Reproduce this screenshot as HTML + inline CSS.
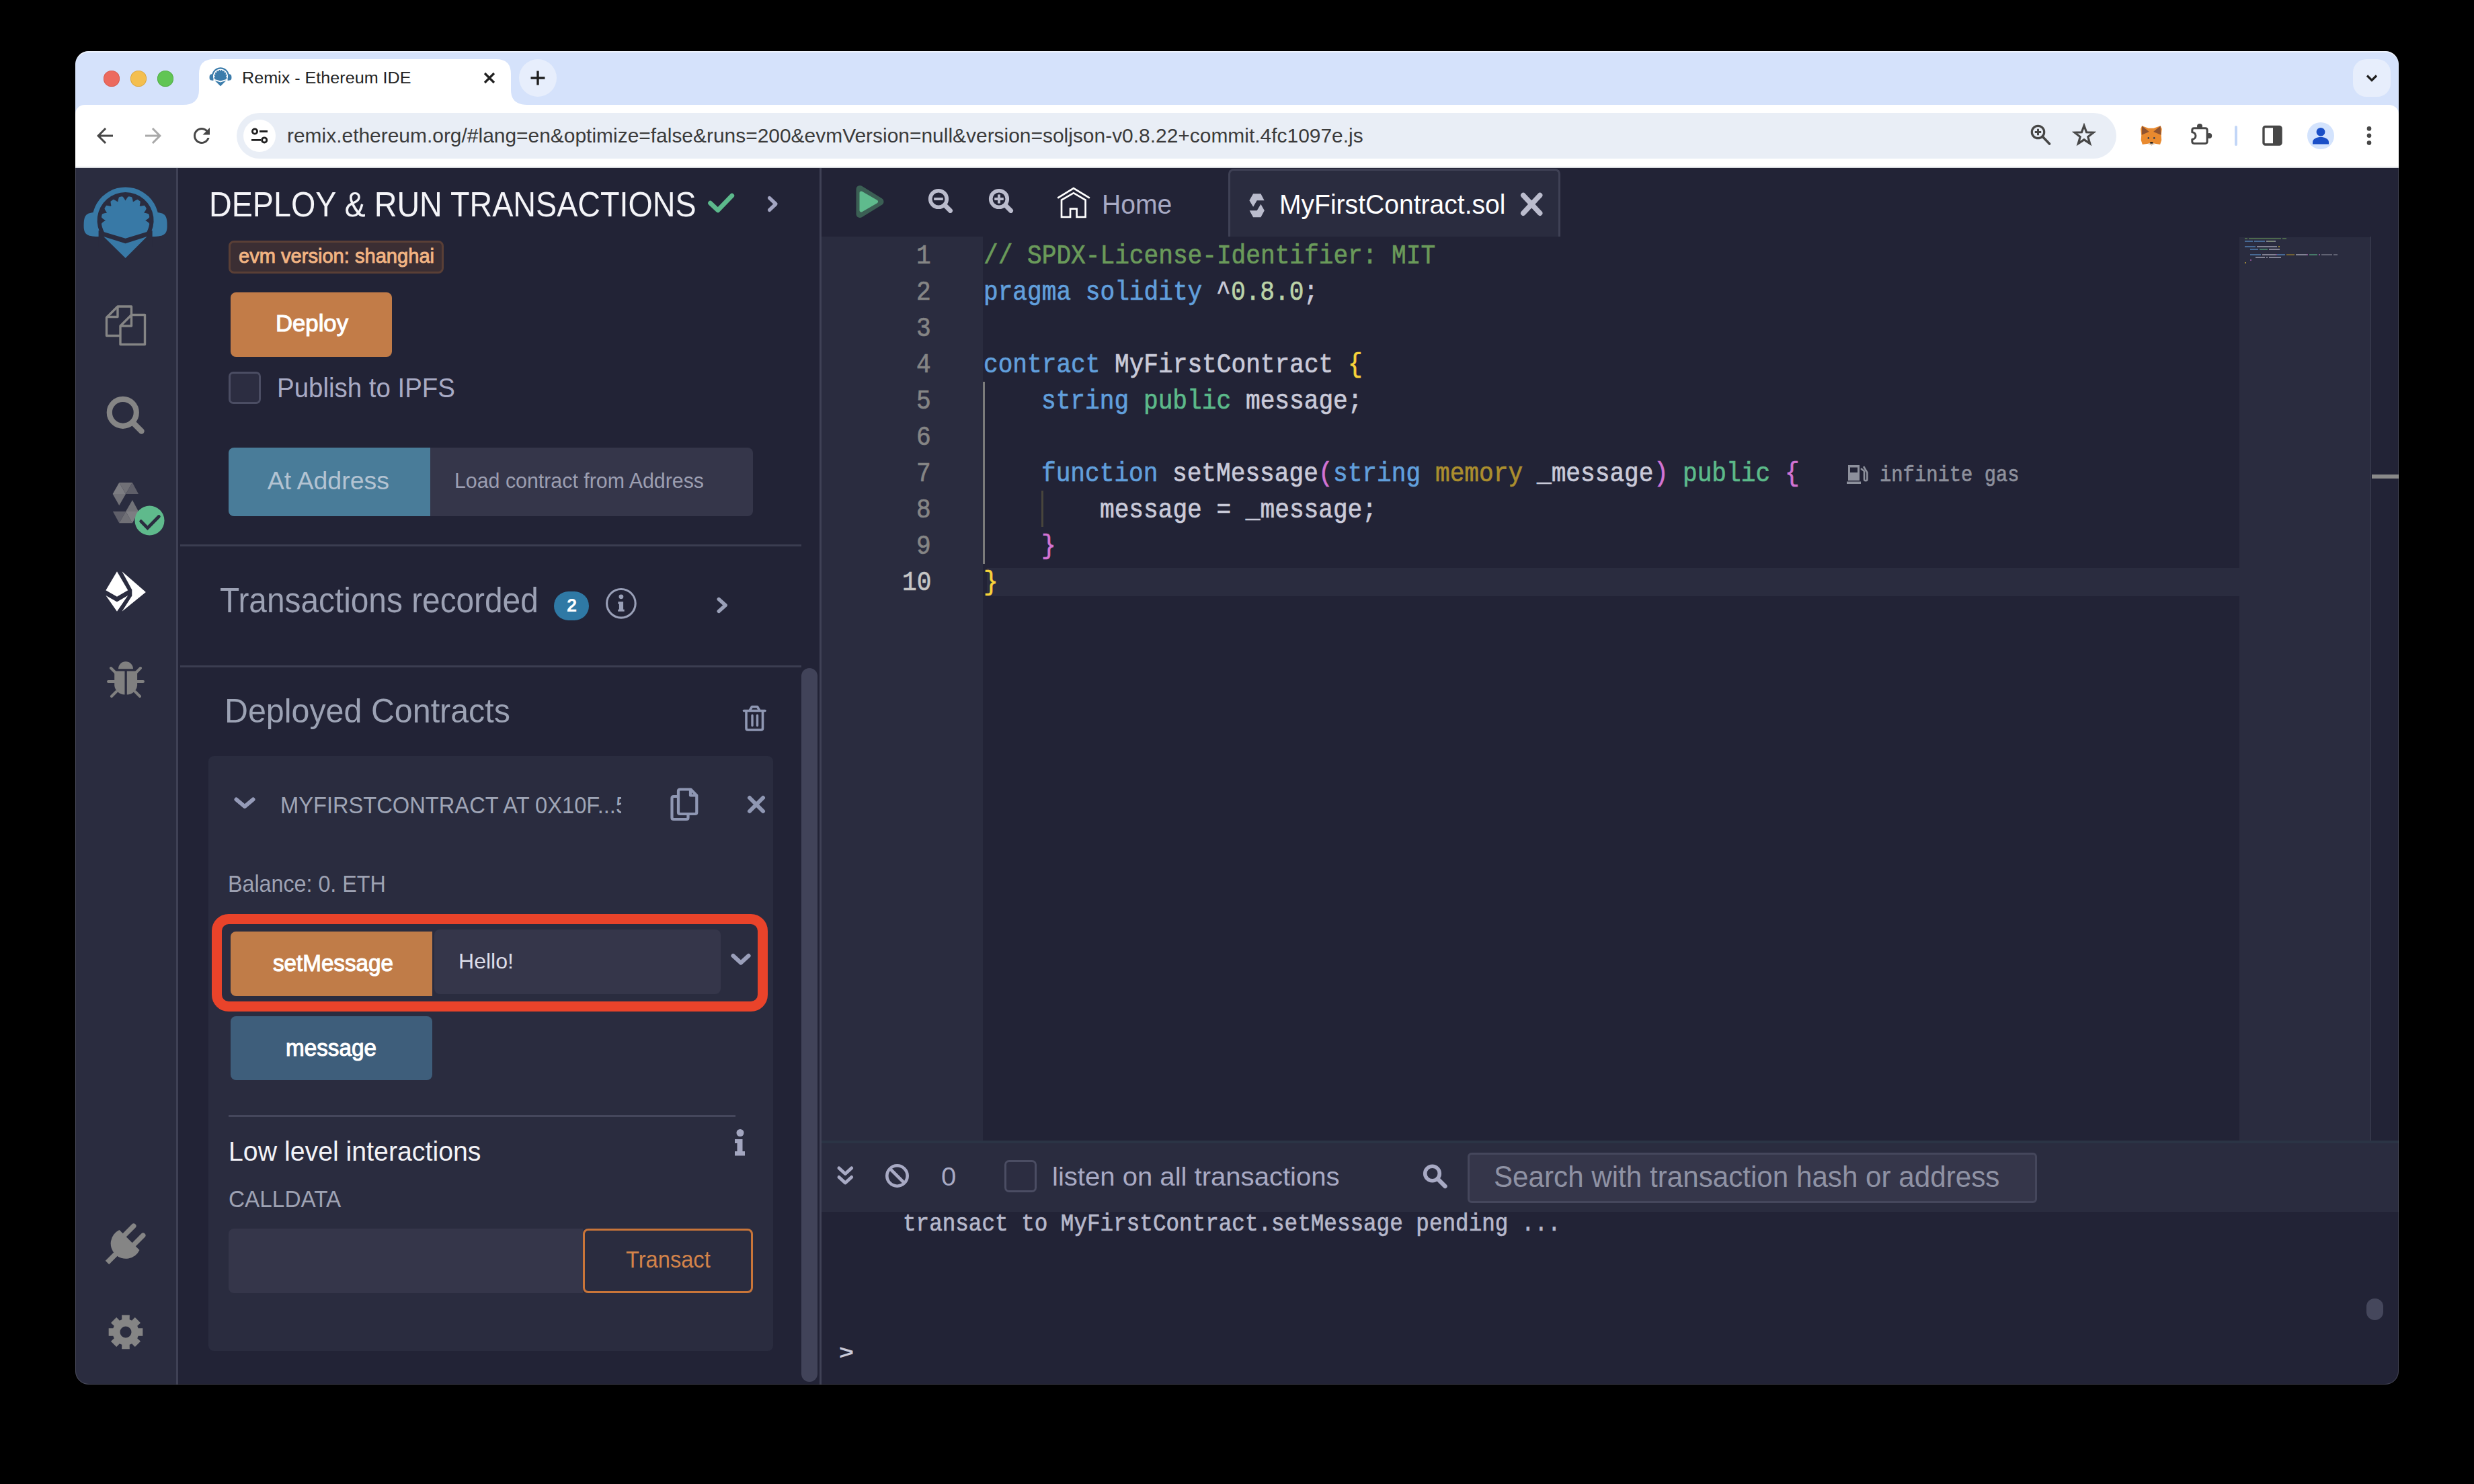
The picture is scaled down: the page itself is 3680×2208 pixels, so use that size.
<!DOCTYPE html><html><head><meta charset="utf-8"><style>
html,body{margin:0;padding:0;background:#000;width:3680px;height:2208px;overflow:hidden}
#r{position:absolute;left:0;top:0;width:3680px;height:2208px;overflow:hidden}
#r>*{position:absolute}
#r>span{white-space:pre}
</style></head><body><div id="r">
<div style="left:112px;top:76px;width:3456px;height:100px;background:#d5e2fb;"></div>
<svg style="left:260px;top:76px;" width="540" height="80" viewBox="0 0 540 80"><path d="M12,80 Q36,80 36,58 L36,34 Q36,12 58,12 L478,12 Q500,12 500,34 L500,58 Q500,80 524,80 Z" fill="#fff"/></svg>
<svg style="left:296px;top:83px;" width="64" height="64" viewBox="0 0 64 64"><g transform="translate(32,30.5) scale(0.265)"><path d="M-43.6,23.4 A49.5,49.5 0 1 1 43.6,23.4 Z" fill="#3b7cab"/><path d="M-44,-12 C-60,-12 -62,-6 -62,8 C-62,22 -56,24 -38,24 L-40,-12 Z" fill="#3b7cab"/><path d="M44,-12 C60,-12 62,-6 62,8 C62,22 56,24 38,24 L40,-12 Z" fill="#3b7cab"/><path d="M-34.9,23.4 A42,42 0 1 1 34.9,23.4 Z" fill="#ffffff"/><polygon points="29.50,0.00 31.34,1.09 33.13,2.32 34.88,3.67 35.65,5.01 35.45,6.25 35.21,7.48 34.93,8.71 34.61,9.92 34.24,11.12 33.83,12.31 33.38,13.49 32.89,14.64 32.36,15.78 31.79,16.90 31.18,18.00 30.53,19.08 29.85,20.13 29.12,21.16 28.37,22.16 27.58,23.14 26.75,24.09 25.90,25.01 25.01,25.90 24.09,26.75 23.14,27.58 22.16,28.37 21.16,29.12 20.13,29.85 19.08,30.53 18.00,31.18 16.90,31.79 15.78,32.36 14.64,32.89 13.49,33.38 12.31,33.83 11.12,34.24 9.92,34.61 8.71,34.93 7.48,35.21 6.25,35.45 5.01,35.65 3.76,35.80 2.51,35.91 1.26,35.98 0.00,36.00 -1.26,35.98 -2.51,35.91 -3.76,35.80 -5.01,35.65 -6.25,35.45 -7.48,35.21 -8.71,34.93 -9.92,34.61 -11.12,34.24 -12.31,33.83 -13.49,33.38 -14.64,32.89 -15.78,32.36 -16.90,31.79 -18.00,31.18 -19.08,30.53 -20.13,29.85 -21.16,29.12 -22.16,28.37 -23.14,27.58 -24.09,26.75 -25.01,25.90 -25.90,25.01 -26.75,24.09 -27.58,23.14 -28.37,22.16 -29.12,21.16 -29.85,20.13 -30.53,19.08 -31.18,18.00 -31.79,16.90 -32.36,15.78 -32.89,14.64 -33.38,13.49 -33.83,12.31 -34.24,11.12 -34.61,9.92 -34.93,8.71 -35.21,7.48 -35.45,6.25 -35.65,5.01 -34.88,3.67 -33.13,2.32 -31.34,1.09 -29.50,0.00 -31.34,-1.09 -33.13,-2.32 -34.88,-3.67 -35.65,-5.01 -35.45,-6.25 -35.21,-7.48 -34.93,-8.71 -34.16,-9.79 -32.03,-10.41 -29.90,-10.88 -27.78,-11.22 -28.22,-12.57 -29.44,-14.36 -30.56,-16.25 -31.18,-18.00 -30.53,-19.08 -29.85,-20.13 -29.12,-21.16 -28.37,-22.16 -26.15,-21.95 -23.99,-21.60 -21.89,-21.14 -21.14,-21.89 -21.60,-23.99 -21.95,-26.15 -22.16,-28.37 -21.16,-29.12 -20.13,-29.85 -19.08,-30.53 -18.00,-31.18 -16.25,-30.56 -14.36,-29.44 -12.57,-28.22 -11.22,-27.78 -10.88,-29.90 -10.41,-32.03 -9.79,-34.16 -8.71,-34.93 -7.48,-35.21 -6.25,-35.45 -5.01,-35.65 -3.67,-34.88 -2.32,-33.13 -1.09,-31.34 -0.00,-29.50 1.09,-31.34 2.32,-33.13 3.67,-34.88 5.01,-35.65 6.25,-35.45 7.48,-35.21 8.71,-34.93 9.79,-34.16 10.41,-32.03 10.88,-29.90 11.22,-27.78 12.57,-28.22 14.36,-29.44 16.25,-30.56 18.00,-31.18 19.08,-30.53 20.13,-29.85 21.16,-29.12 22.16,-28.37 21.95,-26.15 21.60,-23.99 21.14,-21.89 21.89,-21.14 23.99,-21.60 26.15,-21.95 28.37,-22.16 29.12,-21.16 29.85,-20.13 30.53,-19.08 31.18,-18.00 30.56,-16.25 29.44,-14.36 28.22,-12.57 27.78,-11.22 29.90,-10.88 32.03,-10.41 34.16,-9.79 34.93,-8.71 35.21,-7.48 35.45,-6.25 35.65,-5.01 34.88,-3.67 33.13,-2.32 31.34,-1.09" fill="#3b7cab"/><polygon points="-40,15 -32.5,17.1 0,26.8 32,17.1 40,15 40,40 -40,40" fill="#ffffff"/><polygon points="-32.5,24 0,34.3 32,24 0,56" fill="#3b7cab"/></g></svg>
<span style="left:359.96px;top:104.00px;font:400 24.7px/24.7px &quot;Liberation Sans&quot;, sans-serif;color:#1f1f1f;transform:scaleX(1.0185);transform-origin:0 0;">Remix - Ethereum IDE</span>
<svg style="left:712px;top:100px;" width="32" height="32" viewBox="0 0 32 32"><path d="M9,9 L23,23 M23,9 L9,23" stroke="#1f1f1f" stroke-width="3.2" stroke-linecap="butt"/></svg>
<div style="left:772px;top:88px;width:56px;height:56px;background:#e7eefc;border-radius:28px"></div>
<svg style="left:784px;top:100px;" width="32" height="32" viewBox="0 0 32 32"><path d="M16,5.5 V26.5 M5.5,16 H26.5" stroke="#1f1f1f" stroke-width="3.4"/></svg>
<div style="left:3500px;top:88px;width:56px;height:56px;background:#e7eefc;border-radius:20px"></div>
<svg style="left:3512px;top:100px;" width="32" height="32" viewBox="0 0 32 32"><path d="M9,12.5 L16,19.5 L23,12.5" fill="none" stroke="#1f1f1f" stroke-width="3.2"/></svg>
<div style="left:112px;top:156px;width:3456px;height:93px;background:#fff;border-radius:14px 14px 0 0"></div>
<div style="left:112px;top:248px;width:3456px;height:2px;background:#dadce0;"></div>
<svg style="left:138px;top:184px;" width="36" height="36" viewBox="0 0 36 36"><path transform="scale(1.5)" d="M20 11H7.83l5.59-5.59L12 4l-8 8 8 8 1.41-1.41L7.83 13H20v-2z" fill="#474747"/></svg>
<svg style="left:209.5px;top:184px;" width="36" height="36" viewBox="0 0 36 36"><path transform="translate(36,0) scale(-1.5,1.5)" d="M20 11H7.83l5.59-5.59L12 4l-8 8 8 8 1.41-1.41L7.83 13H20v-2z" fill="#a9a9a9"/></svg>
<svg style="left:282px;top:184px;" width="36" height="36" viewBox="0 0 36 36"><path transform="scale(1.5)" d="M17.65 6.35C16.2 4.9 14.21 4 12 4c-4.42 0-7.99 3.58-7.99 8s3.57 8 7.99 8c3.73 0 6.84-2.55 7.73-6h-2.08c-.82 2.33-3.04 4-5.65 4-3.31 0-6-2.69-6-6s2.69-6 6-6c1.66 0 3.14.69 4.22 1.78L13 11h7V4l-2.35 2.35z" fill="#474747"/></svg>
<div style="left:352px;top:168px;width:2796px;height:68px;background:#e9eef6;border-radius:34px"></div>
<div style="left:362px;top:178px;width:48px;height:48px;background:#fff;border-radius:24px"></div>
<svg style="left:362px;top:178px;" width="48" height="48" viewBox="0 0 48 48"><circle cx="17" cy="17.5" r="3.6" fill="none" stroke="#1f1f1f" stroke-width="2.8"/><path d="M24,17.5 H36 M12,30.4 H26" stroke="#1f1f1f" stroke-width="2.8"/><circle cx="31.2" cy="30.4" r="3.6" fill="none" stroke="#1f1f1f" stroke-width="2.8"/></svg>
<span style="left:426.89px;top:186.90px;font:400 29.5px/29.5px &quot;Liberation Sans&quot;, sans-serif;color:#3b3b3b;transform:scaleX(1.0147);transform-origin:0 0;">remix.ethereum.org/#lang=en&amp;optimize=false&amp;runs=200&amp;evmVersion=null&amp;version=soljson-v0.8.22+commit.4fc1097e.js</span>
<svg style="left:3017px;top:183px;" width="36" height="36" viewBox="0 0 36 36"><circle cx="14.5" cy="13.5" r="9.2" fill="none" stroke="#474747" stroke-width="3.2"/><path d="M21,20 L31.5,31" stroke="#474747" stroke-width="3.6" stroke-linecap="round"/><path d="M14.5,8.8 V18.2 M9.8,13.5 H19.2" stroke="#474747" stroke-width="3"/></svg>
<svg style="left:3082px;top:183px;" width="36" height="36" viewBox="0 0 36 36"><path d="M18,4 L21.6,13.8 L32,14.2 L23.8,20.6 L26.6,30.6 L18,24.8 L9.4,30.6 L12.2,20.6 L4,14.2 L14.4,13.8 Z" fill="none" stroke="#474747" stroke-width="3.2" stroke-linejoin="miter"/></svg>
<svg style="left:3180px;top:183px;" width="40" height="37" viewBox="0 0 40 37"><g transform="translate(-3180,-183)"><polygon points="3186,187.3 3195.7,190.8 3203.6,190.8 3213.6,187.3 3215.7,191.8 3214.7,201.3 3215.2,208.6 3213.1,215 3204.2,213.4 3200.5,216.5 3196.8,213.4 3186.8,215 3184.7,208.6 3185.2,201.3 3184.2,191.8" fill="#e98a2f"/><polygon points="3186,187.3 3196.8,196 3185.8,200.7" fill="#8f5330"/><polygon points="3213.6,187.3 3203.1,196 3214.4,200.7" fill="#8f5330"/><polygon points="3194.7,213.9 3200.5,216.5 3205.7,213.9 3200.5,212" fill="#d9c8b8"/><rect x="3198.3" y="211.2" width="4" height="2.4" fill="#161616"/><circle cx="3195.8" cy="205.4" r="1.3" fill="#2c3a55"/><circle cx="3204.3" cy="205.4" r="1.3" fill="#2c3a55"/></g></svg>
<svg style="left:3252px;top:180px;" width="44" height="40" viewBox="0 0 44 40"><g transform="translate(-3252,-180)"><path d="M3260.8,193.5 Q3260.8,190.7 3263.6,190.7 H3280.3 Q3283.1,190.7 3283.1,193.5 V210.6 Q3283.1,213.4 3280.3,213.4 H3263.6 Q3260.8,213.4 3260.8,210.6 V207.2 A5.2,5.2 0 0 0 3260.8,196.8 Z" fill="none" stroke="#474747" stroke-width="3" stroke-linejoin="round"/><circle cx="3272" cy="188" r="4" fill="#474747"/><circle cx="3286.2" cy="202" r="4" fill="#474747"/></g></svg>
<div style="left:3324px;top:187px;width:4px;height:30px;background:#c2d6f7;border-radius:2px"></div>
<svg style="left:3362px;top:184px;" width="36" height="36" viewBox="0 0 36 36"><rect x="5" y="4.5" width="26" height="26.5" rx="2.5" fill="none" stroke="#474747" stroke-width="3.4"/><rect x="19" y="4.5" width="12" height="26.5" fill="#474747"/></svg>
<div style="left:3431.5px;top:181.5px;width:40px;height:40px;background:#d3e3fd;border-radius:20px"></div>
<svg style="left:3431.5px;top:181.5px;" width="40" height="40" viewBox="0 0 40 40"><circle cx="20" cy="14.3" r="6.4" fill="#1a4fc7"/><path d="M8,32.5 V29.5 C8,24.5 14,22 20,22 C26,22 32,24.5 32,29.5 V32.5 Z" fill="#1a4fc7"/></svg>
<svg style="left:3514px;top:183px;" width="20" height="36" viewBox="0 0 20 36"><circle cx="10" cy="8.4" r="3.3" fill="#474747"/><circle cx="10" cy="18.7" r="3.3" fill="#474747"/><circle cx="10" cy="29.6" r="3.3" fill="#474747"/></svg>
<div style="left:154px;top:105px;width:24px;height:24px;background:#ec6a5e;border-radius:12px;box-shadow:inset 0 0 0 0.8px #d3574a"></div>
<div style="left:194px;top:105px;width:24px;height:24px;background:#f4bf4f;border-radius:12px;box-shadow:inset 0 0 0 0.8px #d6a23c"></div>
<div style="left:234px;top:105px;width:24px;height:24px;background:#61c554;border-radius:12px;box-shadow:inset 0 0 0 0.8px #4fa843"></div>
<div style="left:112px;top:250px;width:150px;height:1810px;background:#2a2c3f;"></div>
<div style="left:262px;top:250px;width:3px;height:1810px;background:#3f4155;"></div>
<svg style="left:112px;top:250px;" width="150" height="180" viewBox="0 0 150 180"><g transform="translate(74.6,78) scale(1.0)"><path d="M-43.6,23.4 A49.5,49.5 0 1 1 43.6,23.4 Z" fill="#3879a6"/><path d="M-44,-12 C-60,-12 -62,-6 -62,8 C-62,22 -56,24 -38,24 L-40,-12 Z" fill="#3879a6"/><path d="M44,-12 C60,-12 62,-6 62,8 C62,22 56,24 38,24 L40,-12 Z" fill="#3879a6"/><path d="M-34.9,23.4 A42,42 0 1 1 34.9,23.4 Z" fill="#2a2c3f"/><polygon points="29.50,0.00 31.34,1.09 33.13,2.32 34.88,3.67 35.65,5.01 35.45,6.25 35.21,7.48 34.93,8.71 34.61,9.92 34.24,11.12 33.83,12.31 33.38,13.49 32.89,14.64 32.36,15.78 31.79,16.90 31.18,18.00 30.53,19.08 29.85,20.13 29.12,21.16 28.37,22.16 27.58,23.14 26.75,24.09 25.90,25.01 25.01,25.90 24.09,26.75 23.14,27.58 22.16,28.37 21.16,29.12 20.13,29.85 19.08,30.53 18.00,31.18 16.90,31.79 15.78,32.36 14.64,32.89 13.49,33.38 12.31,33.83 11.12,34.24 9.92,34.61 8.71,34.93 7.48,35.21 6.25,35.45 5.01,35.65 3.76,35.80 2.51,35.91 1.26,35.98 0.00,36.00 -1.26,35.98 -2.51,35.91 -3.76,35.80 -5.01,35.65 -6.25,35.45 -7.48,35.21 -8.71,34.93 -9.92,34.61 -11.12,34.24 -12.31,33.83 -13.49,33.38 -14.64,32.89 -15.78,32.36 -16.90,31.79 -18.00,31.18 -19.08,30.53 -20.13,29.85 -21.16,29.12 -22.16,28.37 -23.14,27.58 -24.09,26.75 -25.01,25.90 -25.90,25.01 -26.75,24.09 -27.58,23.14 -28.37,22.16 -29.12,21.16 -29.85,20.13 -30.53,19.08 -31.18,18.00 -31.79,16.90 -32.36,15.78 -32.89,14.64 -33.38,13.49 -33.83,12.31 -34.24,11.12 -34.61,9.92 -34.93,8.71 -35.21,7.48 -35.45,6.25 -35.65,5.01 -34.88,3.67 -33.13,2.32 -31.34,1.09 -29.50,0.00 -31.34,-1.09 -33.13,-2.32 -34.88,-3.67 -35.65,-5.01 -35.45,-6.25 -35.21,-7.48 -34.93,-8.71 -34.16,-9.79 -32.03,-10.41 -29.90,-10.88 -27.78,-11.22 -28.22,-12.57 -29.44,-14.36 -30.56,-16.25 -31.18,-18.00 -30.53,-19.08 -29.85,-20.13 -29.12,-21.16 -28.37,-22.16 -26.15,-21.95 -23.99,-21.60 -21.89,-21.14 -21.14,-21.89 -21.60,-23.99 -21.95,-26.15 -22.16,-28.37 -21.16,-29.12 -20.13,-29.85 -19.08,-30.53 -18.00,-31.18 -16.25,-30.56 -14.36,-29.44 -12.57,-28.22 -11.22,-27.78 -10.88,-29.90 -10.41,-32.03 -9.79,-34.16 -8.71,-34.93 -7.48,-35.21 -6.25,-35.45 -5.01,-35.65 -3.67,-34.88 -2.32,-33.13 -1.09,-31.34 -0.00,-29.50 1.09,-31.34 2.32,-33.13 3.67,-34.88 5.01,-35.65 6.25,-35.45 7.48,-35.21 8.71,-34.93 9.79,-34.16 10.41,-32.03 10.88,-29.90 11.22,-27.78 12.57,-28.22 14.36,-29.44 16.25,-30.56 18.00,-31.18 19.08,-30.53 20.13,-29.85 21.16,-29.12 22.16,-28.37 21.95,-26.15 21.60,-23.99 21.14,-21.89 21.89,-21.14 23.99,-21.60 26.15,-21.95 28.37,-22.16 29.12,-21.16 29.85,-20.13 30.53,-19.08 31.18,-18.00 30.56,-16.25 29.44,-14.36 28.22,-12.57 27.78,-11.22 29.90,-10.88 32.03,-10.41 34.16,-9.79 34.93,-8.71 35.21,-7.48 35.45,-6.25 35.65,-5.01 34.88,-3.67 33.13,-2.32 31.34,-1.09" fill="#3879a6"/><polygon points="-40,15 -32.5,17.1 0,26.8 32,17.1 40,15 40,40 -40,40" fill="#2a2c3f"/><polygon points="-32.5,24 0,34.3 32,24 0,56" fill="#3879a6"/></g></svg>
<svg style="left:150px;top:445px;" width="76" height="76" viewBox="0 0 76 76"><g fill="none" stroke="#858585" stroke-width="3.4" stroke-linejoin="round" transform="translate(-150,-445)"><path d="M195.5,469 V456 H175 L158.5,472.5 V499.5 H179"/><path d="M175,456 V471.5 H158.5"/><path d="M179,485 L195.5,468.5 H215.5 V512.5 H179 Z"/><path d="M195.5,468.5 V485 H179"/></g></svg>
<svg style="left:150px;top:580px;" width="76" height="76" viewBox="0 0 76 76"><g transform="translate(-150,-580)"><circle cx="182.8" cy="613.8" r="20" fill="none" stroke="#858585" stroke-width="8.2"/><path d="M198,629 L210.5,641.5" stroke="#858585" stroke-width="8.4" stroke-linecap="round"/></g></svg>
<svg style="left:150px;top:700px;" width="100" height="100" viewBox="0 0 100 100"><g transform="translate(-150,-700)"><polygon points="177.3,717.9 167.6,734.9 187.1,734.9" fill="#7d7d82"/><polygon points="177.3,717.9 196.9,717.9 187.1,734.9" fill="#707076"/><polygon points="196.9,717.9 206,734.9 187.1,734.9" fill="#5f5f69"/><polygon points="167.6,734.9 187.1,734.9 177.3,751.9" fill="#727278"/><polygon points="196.9,744.1 187.1,761 206,761" fill="#727278"/><polygon points="167.9,761 187.1,761 177.3,778.2" fill="#5f5f69"/><polygon points="187.1,761 177.3,778.2 196.9,778.2" fill="#707076"/><polygon points="187.1,761 206,761 196.9,778.2" fill="#7d7d82"/><circle cx="222.5" cy="774.5" r="22" fill="#5fba8c"/><path d="M209.7,775.6 L219.5,785.6 L236.3,768.5" fill="none" stroke="#2a2c3f" stroke-width="4.8" stroke-linejoin="miter" stroke-linecap="round"/></g></svg>
<svg style="left:150px;top:840px;" width="80" height="80" viewBox="0 0 80 80"><g transform="translate(-150,-840)" fill="#fff"><polygon points="174,850.2 190.3,878.2 174,887.8 157.4,878.2"/><polygon points="157.4,886 174,895.6 190.3,886 174,909.7"/><polygon points="181.5,850.2 216.9,881 181.5,909.7 196.3,886.5 196.3,877.5"/></g></svg>
<svg style="left:150px;top:975px;" width="76" height="76" viewBox="0 0 76 76"><g transform="translate(-150,-975)" fill="#808080"><path d="M176,995.3 A11,11 0 0 1 198,995.3 Z"/><path d="M170.2,998.5 H185.5 V1033.5 A16,15 0 0 1 170.2,1020 Z"/><path d="M204.1,998.5 H188.8 V1033.5 A16,15 0 0 0 204.1,1020 Z"/><path d="M165,994 L172,1001 M209,994 L202,1001 M161,1014 H171 M213,1014 H203 M166,1036 L173,1029 M208,1036 L201,1029" stroke="#808080" stroke-width="4" stroke-linecap="round"/></g></svg>
<svg style="left:150px;top:1815px;" width="76" height="76" viewBox="0 0 76 76"><g transform="translate(-150,-1815)" fill="#858585"><path d="M177.5,1830 L207.5,1860 A22.5,22.5 0 1 1 177.5,1830 Z"/><path d="M184,1839 L198.8,1824.2 M198,1853 L212.8,1838.2" stroke="#858585" stroke-width="7.4" stroke-linecap="round"/><path d="M174,1864 L159.5,1878.5" stroke="#858585" stroke-width="7.6" stroke-linecap="butt"/></g></svg>
<svg style="left:150px;top:1945px;" width="76" height="76" viewBox="0 0 76 76"><g transform="translate(-150,-1945)"><path fill="#858585" fill-rule="evenodd" d="M212.33,1976.15 L212.33,1987.85 L205.65,1987.70 L204.22,1991.15 L209.05,1995.78 L200.78,2004.05 L196.15,1999.22 L192.70,2000.65 L192.85,2007.33 L181.15,2007.33 L181.30,2000.65 L177.85,1999.22 L173.22,2004.05 L164.95,1995.78 L169.78,1991.15 L168.35,1987.70 L161.67,1987.85 L161.67,1976.15 L168.35,1976.30 L169.78,1972.85 L164.95,1968.22 L173.22,1959.95 L177.85,1964.78 L181.30,1963.35 L181.15,1956.67 L192.85,1956.67 L192.70,1963.35 L196.15,1964.78 L200.78,1959.95 L209.05,1968.22 L204.22,1972.85 L205.65,1976.30 Z M195.5,1982 A8.5,8.5 0 1 0 178.5,1982 A8.5,8.5 0 1 0 195.5,1982 Z"/></g></svg>
<div style="left:265px;top:250px;width:954px;height:1810px;background:#222336;"></div>
<div style="left:1219px;top:250px;width:3px;height:1810px;background:#3f4155;"></div>
<span style="left:311.44px;top:277.80px;font:400 52.5px/52.5px &quot;Liberation Sans&quot;, sans-serif;color:#f4f4f8;transform:scaleX(0.8893);transform-origin:0 0;">DEPLOY &amp; RUN TRANSACTIONS</span>
<svg style="left:1045px;top:280px;" width="56" height="46" viewBox="0 0 56 46"><path d="M11.6,22.2 L22.8,32.8 L43.8,11.2" fill="none" stroke="#5cb98c" stroke-width="6.8" stroke-linecap="round" stroke-linejoin="round"/></svg>
<svg style="left:1130px;top:280px;" width="40" height="46" viewBox="0 0 40 46"><path d="M14.5,14.5 L24,23.5 L14.5,32.5" fill="none" stroke="#a3a5c2" stroke-width="5.2" stroke-linecap="round" stroke-linejoin="round"/></svg>
<div style="left:340px;top:358px;width:320px;height:49px;background:#3b2e33;border:3px solid #5a3f36;border-radius:8px;box-sizing:border-box"></div>
<span style="left:354.61px;top:366.20px;font:400 29.5px/29.5px &quot;Liberation Sans&quot;, sans-serif;color:#f2b483;transform:scaleX(0.9860);transform-origin:0 0;-webkit-text-stroke:0.9px #f2b483">evm version: shanghai</span>
<div style="left:343px;top:435px;width:240px;height:96px;background:#c27c48;border-radius:8px"></div>
<span style="left:409.52px;top:463.10px;font:400 35px/35px &quot;Liberation Sans&quot;, sans-serif;color:#ffffff;transform:scaleX(0.9912);transform-origin:0 0;-webkit-text-stroke:1.1px #fff">Deploy</span>
<div style="left:340px;top:553px;width:48px;height:48px;background:#2c2d41;border:3px solid #4b4d63;border-radius:7px;box-sizing:border-box"></div>
<span style="left:412.02px;top:557.10px;font:400 40.8px/40.8px &quot;Liberation Sans&quot;, sans-serif;color:#a8aac4;transform:scaleX(0.9424);transform-origin:0 0;">Publish to IPFS</span>
<div style="left:340px;top:666px;width:300px;height:102px;background:#497c99;border-radius:8px 0 0 8px"></div>
<span style="left:397.70px;top:696.90px;font:400 37.5px/37.5px &quot;Liberation Sans&quot;, sans-serif;color:#b3c3d2;">At Address</span>
<div style="left:640px;top:666px;width:480px;height:102px;background:#35364a;border-radius:0 8px 8px 0"></div>
<span style="left:676.07px;top:699.90px;font:400 31.5px/31.5px &quot;Liberation Sans&quot;, sans-serif;color:#9c9eb1;transform:scaleX(0.9631);transform-origin:0 0;">Load contract from Address</span>
<div style="left:268px;top:810px;width:924px;height:3px;background:#3b3d51;"></div>
<span style="left:327.06px;top:868.10px;font:400 51.0px/51.0px &quot;Liberation Sans&quot;, sans-serif;color:#9ca1b4;transform:scaleX(0.9372);transform-origin:0 0;">Transactions recorded</span>
<div style="left:824px;top:879.5px;width:52px;height:43.5px;background:#2f79a5;border-radius:22px"></div>
<span style="left:843.00px;top:886.70px;font:700 28px/28px &quot;Liberation Sans&quot;, sans-serif;color:#ffffff;transform:scaleX(0.9733);transform-origin:0 0;">2</span>
<svg style="left:895px;top:870px;" width="56" height="56" viewBox="0 0 56 56"><g transform="translate(-895,-870)" fill="#9aa0b8"><circle cx="923.9" cy="897.8" r="21.3" fill="none" stroke="#9aa0b8" stroke-width="3.1"/><circle cx="923.9" cy="887.8" r="3.4"/><path d="M919.4,895.2 H927.1 V906.7 H928.7 V909.8 H919.2 V906.7 H920.9 V898.7 H919.4 Z"/></g></svg>
<svg style="left:1055px;top:880px;" width="40" height="40" viewBox="0 0 40 40"><path d="M14.2,11.5 L24.2,20.5 L14.2,29.5" fill="none" stroke="#9aa0b8" stroke-width="5.4" stroke-linecap="round" stroke-linejoin="round"/></svg>
<div style="left:268px;top:990px;width:924px;height:3px;background:#3b3d51;"></div>
<div style="left:1192px;top:994px;width:24px;height:1062px;background:#414359;border-radius:12px"></div>
<span style="left:334.07px;top:1033.00px;font:400 50.6px/50.6px &quot;Liberation Sans&quot;, sans-serif;color:#9ca2b4;transform:scaleX(0.9564);transform-origin:0 0;">Deployed Contracts</span>
<svg style="left:1096px;top:1040px;" width="52" height="56" viewBox="0 0 52 56"><g transform="translate(-1096,-1040)" fill="none" stroke="#8f97b3" stroke-width="3.6" stroke-linecap="round" stroke-linejoin="round"><path d="M1106.5,1057.5 H1138"/><path d="M1115.5,1056.5 L1118.5,1051.5 H1126.5 L1129.5,1056.5"/><path d="M1110,1058 V1083.5 Q1110,1086 1112.5,1086 H1132 Q1134.5,1086 1134.5,1083.5 V1058"/><path d="M1119,1064.5 V1079.5 M1126.5,1064.5 V1079.5" stroke-width="3.4"/></g></svg>
<div style="left:310px;top:1125px;width:840px;height:885px;background:#2a2c3f;border-radius:8px"></div>
<svg style="left:340px;top:1180px;" width="48" height="36" viewBox="0 0 48 36"><path d="M11.5,9.5 L24,20 L36.5,9.5" fill="none" stroke="#959bb8" stroke-width="6" stroke-linecap="round" stroke-linejoin="round"/></svg>
<span style="left:417.11px;top:1180.90px;font:400 34.6px/34.6px &quot;Liberation Sans&quot;, sans-serif;color:#9fa5b6;transform:scaleX(0.9442);transform-origin:0 0;">MYFIRSTCONTRACT AT 0X10F...5</span>
<div style="left:924px;top:1170px;width:60px;height:56px;background:#2a2c3f;"></div>
<svg style="left:990px;top:1165px;" width="56" height="64" viewBox="0 0 56 64"><g transform="translate(-990,-1165)" fill="none" stroke="#8f97b3" stroke-width="4.2" stroke-linejoin="round" stroke-linecap="round"><path d="M1011.5,1174.5 H1027.5 L1036.3,1183.5 V1208.5 Q1036.3,1211 1033.8,1211 H1011.5 Q1009,1211 1009,1208.5 V1177 Q1009,1174.5 1011.5,1174.5 Z"/><path d="M1027,1175 V1183.5 H1036"/><path d="M1008.5,1185 H1002 Q999.5,1185 999.5,1187.5 V1216.5 Q999.5,1219 1002,1219 H1021 Q1023.5,1219 1023.5,1216.5 V1211.5"/></g></svg>
<svg style="left:1105px;top:1177px;" width="40" height="40" viewBox="0 0 40 40"><path d="M10,10 L30,30 M30,10 L10,30" stroke="#8f97b3" stroke-width="6" stroke-linecap="round"/></svg>
<span style="left:338.84px;top:1298.00px;font:400 34.6px/34.6px &quot;Liberation Sans&quot;, sans-serif;color:#9ea2b3;transform:scaleX(0.9322);transform-origin:0 0;">Balance: 0. ETH</span>
<div style="left:315px;top:1359.5px;width:827px;height:145.5px;background:transparent;border:15px solid #e9432a;border-radius:25px;box-sizing:border-box"></div>
<div style="left:342.6px;top:1386.1px;width:300px;height:95.8px;background:#c07c48;border-radius:8px 0 0 8px"></div>
<span style="left:405.50px;top:1415.00px;font:400 35px/35px &quot;Liberation Sans&quot;, sans-serif;color:#ffffff;transform:scaleX(0.9480);transform-origin:0 0;-webkit-text-stroke:1.1px #fff">setMessage</span>
<div style="left:645.6px;top:1382.8px;width:426.4px;height:95.8px;background:#35364a;border-radius:8px"></div>
<span style="left:681.88px;top:1414.90px;font:400 31.8px/31.8px &quot;Liberation Sans&quot;, sans-serif;color:#dcdde8;transform:scaleX(1.0084);transform-origin:0 0;">Hello!</span>
<svg style="left:1080px;top:1410px;" width="44" height="36" viewBox="0 0 44 36"><path d="M10.5,12 L22,22.5 L33.5,12" fill="none" stroke="#9a9fba" stroke-width="6.2" stroke-linecap="round" stroke-linejoin="round"/></svg>
<div style="left:342.6px;top:1512.4px;width:300px;height:95px;background:#3e5e7b;border-radius:8px"></div>
<span style="left:425.10px;top:1541.10px;font:400 35px/35px &quot;Liberation Sans&quot;, sans-serif;color:#ffffff;transform:scaleX(0.9506);transform-origin:0 0;-webkit-text-stroke:1.1px #fff">message</span>
<div style="left:340px;top:1659px;width:754px;height:3px;background:#45475c;"></div>
<span style="left:340.03px;top:1693.00px;font:400 41.0px/41.0px &quot;Liberation Sans&quot;, sans-serif;color:#f3f3f7;transform:scaleX(0.9578);transform-origin:0 0;">Low level interactions</span>
<svg style="left:1088px;top:1676px;" width="24" height="48" viewBox="0 0 24 48"><g transform="translate(-1088,-1676)" fill="#a3a6c0"><circle cx="1101" cy="1685.5" r="5.5"/><path d="M1093,1695 H1104.5 V1713 H1108 V1719.5 H1093 V1713 H1096.5 V1701 H1093 Z"/></g></svg>
<span style="left:339.75px;top:1766.00px;font:400 35.0px/35.0px &quot;Liberation Sans&quot;, sans-serif;color:#9ea2b3;transform:scaleX(0.9523);transform-origin:0 0;">CALLDATA</span>
<div style="left:340px;top:1828px;width:526.5px;height:96px;background:#35364a;border-radius:8px 0 0 8px"></div>
<div style="left:867px;top:1828px;width:253px;height:96px;background:transparent;border:3px solid #c97539;border-radius:8px;box-sizing:border-box"></div>
<span style="left:930.50px;top:1856.10px;font:400 35px/35px &quot;Liberation Sans&quot;, sans-serif;color:#d3834a;transform:scaleX(0.9324);transform-origin:0 0;">Transact</span>
<div style="left:1222px;top:250px;width:2346px;height:102px;background:#222336;"></div>
<svg style="left:1262px;top:266px;" width="64" height="68" viewBox="0 0 64 68"><g transform="translate(-1262,-266)"><polygon points="1279,281.5 1309,300 1279,318.5" fill="#3b5f54" stroke="#3b5f54" stroke-width="11" stroke-linejoin="round"/><polygon points="1281,287 1303.5,300 1281,313" fill="#5fbb8d" stroke="#5fbb8d" stroke-width="5" stroke-linejoin="round"/></g></svg>
<svg style="left:1370.6px;top:270px;" width="55" height="55" viewBox="0 0 55 55"><g transform="translate(-1370.6,-270)" fill="none" stroke="#bbbccd"><circle cx="1395.6" cy="296" r="12.3" stroke-width="5.6"/><path d="M1406.1999999999998,306.5 L1413.1999999999998,313.5" stroke-width="6.8" stroke-linecap="round"/><path d="M1388.8,296 H1402.3999999999999" stroke-width="4"/></g></svg>
<svg style="left:1460.6px;top:270px;" width="55" height="55" viewBox="0 0 55 55"><g transform="translate(-1460.6,-270)" fill="none" stroke="#bbbccd"><circle cx="1485.6" cy="296" r="12.3" stroke-width="5.6"/><path d="M1496.1999999999998,306.5 L1503.1999999999998,313.5" stroke-width="6.8" stroke-linecap="round"/><path d="M1478.8,296 H1492.3999999999999" stroke-width="4"/><path d="M1485.6,289.4 V302.6" stroke-width="4"/></g></svg>
<svg style="left:1566px;top:272px;" width="62" height="56" viewBox="0 0 62 56"><g transform="translate(-1566,-272)" fill="none" stroke="#ffffff" stroke-width="2.7" stroke-linejoin="miter"><path d="M1573.2,294.6 L1596.9,280.2 L1620.8,294.6"/><path d="M1579,322.8 V297.6 L1596.9,287.2 L1614.6,297.6 V322.8 H1601.6 V310.7 H1592 V322.8 Z"/></g></svg>
<span style="left:1639.02px;top:284.10px;font:400 40.7px/40.7px &quot;Liberation Sans&quot;, sans-serif;color:#a8aac4;transform:scaleX(0.9605);transform-origin:0 0;">Home</span>
<div style="left:1827px;top:251px;width:494px;height:102px;background:#2a2c3f;border:3px solid #3f4155;border-bottom:none;border-radius:8px 8px 0 0;box-sizing:border-box"></div>
<svg style="left:1850px;top:280px;" width="40" height="50" viewBox="0 0 40 50"><g transform="translate(-1850,-280)" fill="#babccd"><polygon points="1864.1,288.2 1875.4,288.2 1880.6,298.3 1869.7,298.3 1864.1,307.7 1858.4,298.3"/><polygon points="1875.4,303.7 1880.8,313.2 1875.4,323.3 1864.1,323.3 1858.6,313.2 1869.7,313.2"/></g></svg>
<span style="left:1903.12px;top:284.10px;font:400 40.7px/40.7px &quot;Liberation Sans&quot;, sans-serif;color:#ffffff;transform:scaleX(0.9601);transform-origin:0 0;">MyFirstContract.sol</span>
<svg style="left:2255px;top:282px;" width="46" height="46" viewBox="0 0 46 46"><path d="M10.8,8.6 L35.6,35.2 M35.6,8.6 L10.8,35.2" stroke="#bbbccd" stroke-width="7.6" stroke-linecap="round"/></svg>
<div style="left:1222px;top:352px;width:240px;height:1345px;background:#2a2c3f;"></div>
<div style="left:1462px;top:352px;width:1869px;height:1345px;background:#222336;"></div>
<div style="left:1468px;top:845px;width:1863px;height:42px;background:#2a2c3f;"></div>
<div style="left:3331px;top:353px;width:195px;height:1344px;background:#2a2c3f;"></div>
<div style="left:3331px;top:352px;width:195px;height:1px;background:#222336;"></div>
<div style="left:3526px;top:352px;width:42px;height:1px;background:#2f3146;"></div>
<div style="left:3526px;top:352px;width:42px;height:1345px;background:#222336;border-left:1px solid #3d3f52;box-sizing:border-box"></div>
<div style="left:3528px;top:706px;width:40px;height:6px;background:#8a8a8a;"></div>
<div style="left:1462px;top:568px;width:3px;height:271px;background:#7b7b7b;"></div>
<div style="left:1549px;top:730px;width:3px;height:54px;background:#48453c;"></div>
<span style="left:1363.42px;top:362.00px;font:400 40px/40px &quot;Liberation Mono&quot;,monospace;color:#858585;transform:scaleX(0.9033);transform-origin:0 0;-webkit-text-stroke:0.7px #858585">1</span>
<span style="left:1363.42px;top:416.00px;font:400 40px/40px &quot;Liberation Mono&quot;,monospace;color:#858585;transform:scaleX(0.9033);transform-origin:0 0;-webkit-text-stroke:0.7px #858585">2</span>
<span style="left:1363.42px;top:470.00px;font:400 40px/40px &quot;Liberation Mono&quot;,monospace;color:#858585;transform:scaleX(0.9033);transform-origin:0 0;-webkit-text-stroke:0.7px #858585">3</span>
<span style="left:1363.42px;top:524.00px;font:400 40px/40px &quot;Liberation Mono&quot;,monospace;color:#858585;transform:scaleX(0.9033);transform-origin:0 0;-webkit-text-stroke:0.7px #858585">4</span>
<span style="left:1363.42px;top:578.00px;font:400 40px/40px &quot;Liberation Mono&quot;,monospace;color:#858585;transform:scaleX(0.9033);transform-origin:0 0;-webkit-text-stroke:0.7px #858585">5</span>
<span style="left:1363.42px;top:632.00px;font:400 40px/40px &quot;Liberation Mono&quot;,monospace;color:#858585;transform:scaleX(0.9033);transform-origin:0 0;-webkit-text-stroke:0.7px #858585">6</span>
<span style="left:1363.42px;top:686.00px;font:400 40px/40px &quot;Liberation Mono&quot;,monospace;color:#858585;transform:scaleX(0.9033);transform-origin:0 0;-webkit-text-stroke:0.7px #858585">7</span>
<span style="left:1363.42px;top:740.00px;font:400 40px/40px &quot;Liberation Mono&quot;,monospace;color:#858585;transform:scaleX(0.9033);transform-origin:0 0;-webkit-text-stroke:0.7px #858585">8</span>
<span style="left:1363.42px;top:794.00px;font:400 40px/40px &quot;Liberation Mono&quot;,monospace;color:#858585;transform:scaleX(0.9033);transform-origin:0 0;-webkit-text-stroke:0.7px #858585">9</span>
<span style="left:1341.74px;top:848.00px;font:400 40px/40px &quot;Liberation Mono&quot;,monospace;color:#c6c6c6;transform:scaleX(0.9033);transform-origin:0 0;-webkit-text-stroke:0.7px #c6c6c6">10</span>
<span style="left:1462.50px;top:362.00px;font:400 40px/40px &quot;Liberation Mono&quot;,monospace;color:#6a9a5a;transform:scaleX(0.9033);transform-origin:0 0;-webkit-text-stroke:0.7px #6a9a5a">// SPDX-License-Identifier: MIT</span>
<span style="left:1462.50px;top:416.00px;font:400 40px/40px &quot;Liberation Mono&quot;,monospace;color:#619fdc;transform:scaleX(0.9033);transform-origin:0 0;-webkit-text-stroke:0.7px #619fdc">pragma solidity</span>
<span style="left:1809.38px;top:416.00px;font:400 40px/40px &quot;Liberation Mono&quot;,monospace;color:#c9cad9;transform:scaleX(0.9033);transform-origin:0 0;-webkit-text-stroke:0.7px #c9cad9">^</span>
<span style="left:1831.06px;top:416.00px;font:400 40px/40px &quot;Liberation Mono&quot;,monospace;color:#bcd3a8;transform:scaleX(0.9033);transform-origin:0 0;-webkit-text-stroke:0.7px #bcd3a8">0.8.0</span>
<span style="left:1939.46px;top:416.00px;font:400 40px/40px &quot;Liberation Mono&quot;,monospace;color:#c9cad9;transform:scaleX(0.9033);transform-origin:0 0;-webkit-text-stroke:0.7px #c9cad9">;</span>
<span style="left:1462.50px;top:524.00px;font:400 40px/40px &quot;Liberation Mono&quot;,monospace;color:#619fdc;transform:scaleX(0.9033);transform-origin:0 0;-webkit-text-stroke:0.7px #619fdc">contract</span>
<span style="left:1657.62px;top:524.00px;font:400 40px/40px &quot;Liberation Mono&quot;,monospace;color:#c9cad9;transform:scaleX(0.9033);transform-origin:0 0;-webkit-text-stroke:0.7px #c9cad9">MyFirstContract </span>
<span style="left:2004.50px;top:524.00px;font:400 40px/40px &quot;Liberation Mono&quot;,monospace;color:#f8d33a;transform:scaleX(0.9033);transform-origin:0 0;-webkit-text-stroke:0.7px #f8d33a">{</span>
<span style="left:1549.22px;top:578.00px;font:400 40px/40px &quot;Liberation Mono&quot;,monospace;color:#619fdc;transform:scaleX(0.9033);transform-origin:0 0;-webkit-text-stroke:0.7px #619fdc">string</span>
<span style="left:1700.98px;top:578.00px;font:400 40px/40px &quot;Liberation Mono&quot;,monospace;color:#5cba8a;transform:scaleX(0.9033);transform-origin:0 0;-webkit-text-stroke:0.7px #5cba8a">public</span>
<span style="left:1852.74px;top:578.00px;font:400 40px/40px &quot;Liberation Mono&quot;,monospace;color:#c9cad9;transform:scaleX(0.9033);transform-origin:0 0;-webkit-text-stroke:0.7px #c9cad9">message;</span>
<span style="left:1549.22px;top:686.00px;font:400 40px/40px &quot;Liberation Mono&quot;,monospace;color:#619fdc;transform:scaleX(0.9033);transform-origin:0 0;-webkit-text-stroke:0.7px #619fdc">function</span>
<span style="left:1744.34px;top:686.00px;font:400 40px/40px &quot;Liberation Mono&quot;,monospace;color:#c9cad9;transform:scaleX(0.9033);transform-origin:0 0;-webkit-text-stroke:0.7px #c9cad9">setMessage</span>
<span style="left:1961.14px;top:686.00px;font:400 40px/40px &quot;Liberation Mono&quot;,monospace;color:#d273d3;transform:scaleX(0.9033);transform-origin:0 0;-webkit-text-stroke:0.7px #d273d3">(</span>
<span style="left:1982.82px;top:686.00px;font:400 40px/40px &quot;Liberation Mono&quot;,monospace;color:#619fdc;transform:scaleX(0.9033);transform-origin:0 0;-webkit-text-stroke:0.7px #619fdc">string</span>
<span style="left:2134.58px;top:686.00px;font:400 40px/40px &quot;Liberation Mono&quot;,monospace;color:#ab8e2e;transform:scaleX(0.9033);transform-origin:0 0;-webkit-text-stroke:0.7px #ab8e2e">memory</span>
<span style="left:2286.34px;top:686.00px;font:400 40px/40px &quot;Liberation Mono&quot;,monospace;color:#c9cad9;transform:scaleX(0.9033);transform-origin:0 0;-webkit-text-stroke:0.7px #c9cad9">_message</span>
<span style="left:2459.78px;top:686.00px;font:400 40px/40px &quot;Liberation Mono&quot;,monospace;color:#d273d3;transform:scaleX(0.9033);transform-origin:0 0;-webkit-text-stroke:0.7px #d273d3">)</span>
<span style="left:2503.14px;top:686.00px;font:400 40px/40px &quot;Liberation Mono&quot;,monospace;color:#5cba8a;transform:scaleX(0.9033);transform-origin:0 0;-webkit-text-stroke:0.7px #5cba8a">public</span>
<span style="left:2654.90px;top:686.00px;font:400 40px/40px &quot;Liberation Mono&quot;,monospace;color:#d273d3;transform:scaleX(0.9033);transform-origin:0 0;-webkit-text-stroke:0.7px #d273d3">{</span>
<span style="left:1635.94px;top:740.00px;font:400 40px/40px &quot;Liberation Mono&quot;,monospace;color:#c9cad9;transform:scaleX(0.9033);transform-origin:0 0;-webkit-text-stroke:0.7px #c9cad9">message = _message;</span>
<span style="left:1549.22px;top:794.00px;font:400 40px/40px &quot;Liberation Mono&quot;,monospace;color:#d273d3;transform:scaleX(0.9033);transform-origin:0 0;-webkit-text-stroke:0.7px #d273d3">}</span>
<span style="left:1462.50px;top:848.00px;font:400 40px/40px &quot;Liberation Mono&quot;,monospace;color:#f8d33a;transform:scaleX(0.9033);transform-origin:0 0;-webkit-text-stroke:0.7px #f8d33a">}</span>
<svg style="left:2740px;top:686px;" width="44" height="40" viewBox="0 0 44 40"><g transform="translate(-2740,-686)" fill="#8d909c"><path d="M2749,692 H2766 V715 H2749 Z M2752,695.5 V703 H2763 V695.5 Z" fill-rule="evenodd"/><rect x="2747" y="716.5" width="21" height="3.5"/><path d="M2768,697 L2773,701 V713 A2.2,2.2 0 0 0 2777.4,713 V703 L2772,694" fill="none" stroke="#8d909c" stroke-width="2.6"/></g></svg>
<span style="left:2796.00px;top:691.00px;font:400 33px/33px &quot;Liberation Mono&quot;,monospace;color:#8d909c;transform:scaleX(0.8737);transform-origin:0 0;-webkit-text-stroke:0.7px #8d909c">infinite gas</span>
<div style="left:3339.0px;top:354.3px;width:4.0px;height:2.2px;background:#6a9a5a;opacity:0.55"></div>
<div style="left:3345.0px;top:354.3px;width:48.0px;height:2.2px;background:#6a9a5a;opacity:0.55"></div>
<div style="left:3395.0px;top:354.3px;width:6.0px;height:2.2px;background:#6a9a5a;opacity:0.55"></div>
<div style="left:3339.0px;top:358.3px;width:12.0px;height:2.2px;background:#619fdc;opacity:0.55"></div>
<div style="left:3353.0px;top:358.3px;width:16.0px;height:2.2px;background:#619fdc;opacity:0.55"></div>
<div style="left:3371.0px;top:358.3px;width:2.0px;height:2.2px;background:#c9cad9;opacity:0.55"></div>
<div style="left:3373.0px;top:358.3px;width:10.0px;height:2.2px;background:#bcd3a8;opacity:0.55"></div>
<div style="left:3383.0px;top:358.3px;width:2.0px;height:2.2px;background:#c9cad9;opacity:0.55"></div>
<div style="left:3339.0px;top:366.3px;width:16.0px;height:2.2px;background:#619fdc;opacity:0.55"></div>
<div style="left:3357.0px;top:366.3px;width:30.0px;height:2.2px;background:#c9cad9;opacity:0.55"></div>
<div style="left:3389.0px;top:366.3px;width:2.0px;height:2.2px;background:#f8d33a;opacity:0.55"></div>
<div style="left:3347.0px;top:370.3px;width:12.0px;height:2.2px;background:#619fdc;opacity:0.55"></div>
<div style="left:3361.0px;top:370.3px;width:12.0px;height:2.2px;background:#5cba8a;opacity:0.55"></div>
<div style="left:3375.0px;top:370.3px;width:16.0px;height:2.2px;background:#c9cad9;opacity:0.55"></div>
<div style="left:3347.0px;top:378.3px;width:16.0px;height:2.2px;background:#619fdc;opacity:0.55"></div>
<div style="left:3365.0px;top:378.3px;width:20.0px;height:2.2px;background:#c9cad9;opacity:0.55"></div>
<div style="left:3385.0px;top:378.3px;width:2.0px;height:2.2px;background:#d273d3;opacity:0.55"></div>
<div style="left:3387.0px;top:378.3px;width:12.0px;height:2.2px;background:#619fdc;opacity:0.55"></div>
<div style="left:3401.0px;top:378.3px;width:12.0px;height:2.2px;background:#ab8e2e;opacity:0.55"></div>
<div style="left:3415.0px;top:378.3px;width:16.0px;height:2.2px;background:#c9cad9;opacity:0.55"></div>
<div style="left:3431.0px;top:378.3px;width:2.0px;height:2.2px;background:#d273d3;opacity:0.55"></div>
<div style="left:3435.0px;top:378.3px;width:12.0px;height:2.2px;background:#5cba8a;opacity:0.55"></div>
<div style="left:3449.0px;top:378.3px;width:2.0px;height:2.2px;background:#d273d3;opacity:0.55"></div>
<div style="left:3355.0px;top:382.3px;width:14.0px;height:2.2px;background:#c9cad9;opacity:0.55"></div>
<div style="left:3371.0px;top:382.3px;width:2.0px;height:2.2px;background:#c9cad9;opacity:0.55"></div>
<div style="left:3375.0px;top:382.3px;width:18.0px;height:2.2px;background:#c9cad9;opacity:0.55"></div>
<div style="left:3347.0px;top:386.3px;width:2.0px;height:2.2px;background:#d273d3;opacity:0.55"></div>
<div style="left:3339.0px;top:390.3px;width:2.0px;height:2.2px;background:#f8d33a;opacity:0.55"></div>
<div style="left:3453.0px;top:378.3px;width:16.0px;height:2.2px;background:#8d909c;opacity:0.55"></div>
<div style="left:3471.0px;top:378.3px;width:6.0px;height:2.2px;background:#8d909c;opacity:0.55"></div>
<div style="left:1222px;top:1701px;width:2346px;height:102px;background:#2a2c3f;"></div>
<div style="left:1222px;top:1697px;width:2346px;height:4px;background:#2b3445;"></div>
<div style="left:1222px;top:1803px;width:2346px;height:257px;background:#222336;"></div>
<svg style="left:1238px;top:1728px;" width="38" height="42" viewBox="0 0 38 42"><g transform="translate(-1238,-1728)" fill="none" stroke="#a8aac4" stroke-width="5" stroke-linecap="round" stroke-linejoin="round"><path d="M1248,1738 L1257.3,1746.5 L1266.6,1738"/><path d="M1248,1751.5 L1257.3,1760 L1266.6,1751.5"/></g></svg>
<svg style="left:1310px;top:1726px;" width="50" height="50" viewBox="0 0 50 50"><g transform="translate(-1310,-1726)" fill="none" stroke="#a8aac4" stroke-width="4.6"><circle cx="1334.5" cy="1749.5" r="15.2"/><path d="M1324,1739 L1345,1760"/></g></svg>
<span style="left:1399.95px;top:1731.50px;font:400 38px/38px &quot;Liberation Sans&quot;, sans-serif;color:#a8aac4;transform:scaleX(1.0526);transform-origin:0 0;">0</span>
<div style="left:1494px;top:1726px;width:48px;height:48px;background:#2c2d41;border:3px solid #4b4d63;border-radius:7px;box-sizing:border-box"></div>
<span style="left:1564.89px;top:1731.90px;font:400 38px/38px &quot;Liberation Sans&quot;, sans-serif;color:#a8aac4;transform:scaleX(1.0543);transform-origin:0 0;">listen on all transactions</span>
<svg style="left:2110px;top:1725px;" width="50" height="50" viewBox="0 0 50 50"><g transform="translate(-2110,-1725)"><circle cx="2130.5" cy="1746" r="10.8" fill="none" stroke="#a8aac4" stroke-width="5.6"/><path d="M2138.5,1754 L2149.5,1765" stroke="#a8aac4" stroke-width="6.4" stroke-linecap="round"/></g></svg>
<div style="left:2183px;top:1714.6px;width:847px;height:75.4px;background:#35364a;border:3px solid #45475c;border-radius:6px;box-sizing:border-box"></div>
<span style="left:2221.91px;top:1729.30px;font:400 44.6px/44.6px &quot;Liberation Sans&quot;, sans-serif;color:#8f92a4;transform:scaleX(0.9455);transform-origin:0 0;">Search with transaction hash or address</span>
<span style="left:1343.00px;top:1803.80px;font:400 36px/36px &quot;Liberation Mono&quot;,monospace;color:#b6b8cb;transform:scaleX(0.9060);transform-origin:0 0;-webkit-text-stroke:0.7px #b6b8cb">transact to MyFirstContract.setMessage pending ...</span>
<span style="left:1247.75px;top:1997.00px;font:700 30px/30px &quot;Liberation Sans&quot;, sans-serif;color:#c9cad9;transform:scaleX(1.2500);transform-origin:0 0;">&gt;</span>
<div style="left:3520px;top:1931.7px;width:24.5px;height:32px;background:#45475c;border-radius:12px"></div>
<div style="left:112px;top:76px;width:20px;height:20px;background:radial-gradient(circle at 100% 100%, transparent 19.5px, #000 20.5px);"></div>
<div style="left:3548px;top:76px;width:20px;height:20px;background:radial-gradient(circle at 0 100%, transparent 19.5px, #000 20.5px);"></div>
<div style="left:112px;top:2040px;width:20px;height:20px;background:radial-gradient(circle at 100% 0, transparent 19.5px, #000 20.5px);"></div>
<div style="left:3548px;top:2040px;width:20px;height:20px;background:radial-gradient(circle at 0 0, transparent 19.5px, #000 20.5px);"></div>
<div style="left:0px;top:2060px;width:3680px;height:148px;background:#000;"></div>
<div style="left:112px;top:76px;width:3456px;height:1984px;background:transparent;border:1px solid rgba(255,255,255,0.15);border-top:2px solid rgba(255,255,255,0.6);border-radius:20px;box-sizing:border-box"></div>
<div style="left:3568px;top:0px;width:112px;height:2208px;background:#000;"></div></div></body></html>
